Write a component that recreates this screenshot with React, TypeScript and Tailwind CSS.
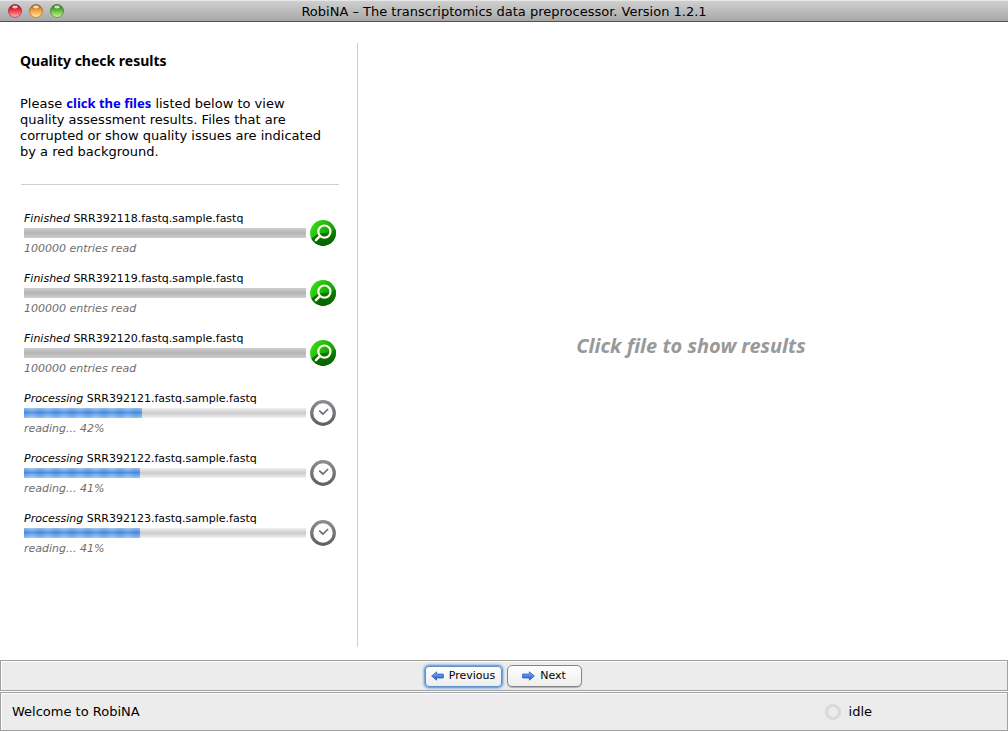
type FileEntry = { name: string; percent: number };

const files: FileEntry[] = [
  { name: "SRR392118.fastq.sample.fastq", percent: 100 },
  { name: "SRR392119.fastq.sample.fastq", percent: 100 },
  { name: "SRR392120.fastq.sample.fastq", percent: 100 },
  { name: "SRR392121.fastq.sample.fastq", percent: 42 },
  { name: "SRR392122.fastq.sample.fastq", percent: 41 },
  { name: "SRR392123.fastq.sample.fastq", percent: 41 },
];

const lights = [
  { id: "close", label: "Close", top: "#7d1a22", mid: "#ea2c38", low: "#ffb4b8" },
  { id: "minimize", label: "Minimize", top: "#94501a", mid: "#ee9838", low: "#fff09a" },
  { id: "zoom", label: "Zoom", top: "#2c6a1e", mid: "#5cb034", low: "#cdf79c" },
];

function TitleBar() {
  return (
    <header className="flex h-[22px] shrink-0 items-center border-t border-b border-t-[#e6e6e6] border-b-[#515151] bg-linear-to-b from-[#cfcfcf] to-[#a8a8a8] px-2">
      <div className="flex flex-1 gap-[7px]">
        {lights.map((l) => (
          <button key={l.id} type="button" aria-label={l.label} className="size-[14px]">
            <svg viewBox="0 0 14 14" className="block size-full">
              <defs>
                <linearGradient id={l.id} x1="0" y1="0" x2="0" y2="1">
                  <stop offset="0" stopColor={l.top} />
                  <stop offset="0.4" stopColor={l.mid} />
                  <stop offset="1" stopColor={l.low} />
                </linearGradient>
              </defs>
              <circle cx="7" cy="7.5" r="6.5" fill="#e2e2e2" opacity="0.6" />
              <circle cx="7" cy="7" r="6.5" fill={`url(#${l.id})`} stroke={l.top} strokeOpacity="0.6" strokeWidth="1" />
              <ellipse cx="7" cy="3" rx="2.8" ry="1.4" fill="#fff" opacity="0.75" />
            </svg>
          </button>
        ))}
      </div>
      <h1 className="pt-[2px] text-[13px] leading-[18px]">RobiNA – The transcriptomics data preprocessor. Version 1.2.1</h1>
      <div className="flex-1" />
    </header>
  );
}

function MagnifierIcon() {
  return (
    <svg viewBox="0 0 26 26" className="block size-full">
      <defs>
        <linearGradient id="leaf" x1="0" y1="0" x2="1" y2="0.6">
          <stop offset="0" stopColor="#3bea14" />
          <stop offset="1" stopColor="#0b8a04" />
        </linearGradient>
        <linearGradient id="shade" x1="0" y1="0" x2="0" y2="1">
          <stop offset="0" stopColor="#0a8204" />
          <stop offset="1" stopColor="#066000" />
        </linearGradient>
        <clipPath id="disc">
          <circle cx="13" cy="13" r="12.9" />
        </clipPath>
      </defs>
      <g clipPath="url(#disc)">
        <rect width="26" height="26" fill="url(#leaf)" />
        <path d="M0 19 C5 17 6 13.5 13 13 C20 12.7 23 11 26 9 V26 H0Z" fill="url(#shade)" />
      </g>
      <circle cx="14.4" cy="11.6" r="6.1" fill="none" stroke="#fffde8" strokeWidth="2.2" />
      <path d="M10 16 L5.9 20.2" stroke="#fffde8" strokeWidth="2.5" strokeLinecap="round" />
    </svg>
  );
}

function ClockIcon() {
  return (
    <svg viewBox="0 0 26 26" className="block size-full">
      <defs>
        <linearGradient id="ring" x1="0" y1="0" x2="0" y2="1">
          <stop offset="0" stopColor="#898b8f" />
          <stop offset="1" stopColor="#606266" />
        </linearGradient>
      </defs>
      <circle cx="13" cy="13" r="11.3" fill="#fff" stroke="url(#ring)" strokeWidth="3.2" />
      <path d="M9.2 10.6 L12.9 14 L18.1 9" fill="none" stroke="#6d6f73" strokeWidth="1.7" />
    </svg>
  );
}

function FileRow({ name, percent }: FileEntry) {
  const done = percent === 100;
  return (
    <li className="flex h-[60px] items-start gap-1">
      <div className="min-w-0 flex-1">
        <p className="truncate text-[11px] leading-[18px]">
          <em>{done ? "Finished" : "Processing"}</em> {name}
        </p>
        <div
          role="progressbar"
          aria-label={name}
          aria-valuenow={percent}
          className={
            done
              ? "h-[10px] bg-linear-to-b from-[#cecece] via-[#b4b4b4] to-[#cfcfcf]"
              : "h-[10px] bg-linear-to-b from-[#f0f0f0] via-[#cbcbcb] to-[#f2f2f2]"
          }
        >
          {!done && (
            <div
              className="h-full bg-[repeating-linear-gradient(90deg,#2563b028_0px,#ffffff14_8px,#2563b028_16px),linear-gradient(180deg,#a3c8f2_0%,#4c8ddf_45%,#5a9ae8_55%,#9ed0fb_100%)]"
              style={{ width: `${percent}%` }}
            />
          )}
        </div>
        <p className="mt-[2px] text-[11px] leading-[18px] text-[#6e6e6e] italic">
          {done ? "100000 entries read" : `reading... ${percent}%`}
        </p>
      </div>
      <button type="button" aria-label={`${done ? "View" : "Pending"} ${name}`} className="mt-[10px] size-[26px] shrink-0">
        {done ? <MagnifierIcon /> : <ClockIcon />}
      </button>
    </li>
  );
}

function ArrowIcon({ left }: { left?: boolean }) {
  return (
    <svg viewBox="0 0 13 10" className={left ? "h-[10px] w-[13px] -scale-x-100" : "h-[10px] w-[13px]"}>
      <defs>
        <linearGradient id="arrow" x1="0" y1="0" x2="0" y2="1">
          <stop offset="0" stopColor="#8fbcff" />
          <stop offset="0.55" stopColor="#4580f0" />
          <stop offset="1" stopColor="#1c48b4" />
        </linearGradient>
      </defs>
      <path d="M0.6 3 H7.4 V0.8 L12.4 5 L7.4 9.2 V7 H0.6Z" fill="url(#arrow)" stroke="#2c55ac" strokeWidth="0.7" strokeLinejoin="round" />
    </svg>
  );
}

export default function App() {
  return (
    <div className="flex min-h-screen flex-col bg-white pb-px font-['DejaVu_Sans',sans-serif] text-black">
      <TitleBar />
      <main className="flex flex-1 pt-[21px] pb-[13px]">
        <section className="w-[358px] shrink-0 border-r border-[#cfcfcf] pr-[18px] pl-5">
          <h2 className="pt-2 font-['Noto_Sans',sans-serif] text-[14px] leading-5 font-bold">Quality check results</h2>
          <p className="mt-6 text-[13px] leading-4">
            Please <strong className="font-['Noto_Sans',sans-serif] text-[#0000ee]">click the files</strong> listed below to view
            <br />
            quality assessment results. Files that are
            <br />
            corrupted or show quality issues are indicated
            <br />
            by a red background.
          </p>
          <hr className="mt-6 ml-px border-[#cfcfcf]" />
          <ul className="mt-[25px] pr-[3px] pl-1">
            {files.map((f) => (
              <FileRow key={f.name} {...f} />
            ))}
          </ul>
        </section>
        <section className="flex flex-1 items-center justify-center pt-[2px] pl-4">
          <p className="font-['Noto_Sans',sans-serif] text-[20px] leading-6 font-bold text-[#999999] italic">
            Click file to show results
          </p>
        </section>
      </main>
      <nav className="flex h-[31px] items-center justify-center gap-[5px] border border-[#a0a0a0] bg-[#ececec] pt-px pr-[2px] shadow-[inset_1px_1px_0_#ffffff]">
        <button
          type="button"
          className="flex h-[21px] w-[77px] items-center justify-center gap-[5px] rounded-[4px] border border-[#5f8fc4] bg-linear-to-b from-white to-[#ededed] text-[11px] shadow-[0_0_0_1px_#7aa7da,0_0_2px_2px_#9dc0e8]"
        >
          <ArrowIcon left />
          Previous
        </button>
        <button
          type="button"
          className="flex h-[22px] w-[75px] items-center justify-center gap-[5px] rounded-[5px] border border-[#858585] bg-linear-to-b from-white to-[#ededed] text-[11px] shadow-[0_1px_1px_#b0b0b0]"
        >
          <ArrowIcon />
          Next
        </button>
      </nav>
      <footer className="mt-px flex h-[39px] items-center justify-between border border-[#a0a0a0] bg-[#ececec] pr-[135px] pl-[11px] text-[13px] shadow-[inset_1px_1px_0_#ffffff]">
        <span>Welcome to RobiNA</span>
        <span className="flex items-center gap-2">
          <span className="size-4 rounded-full border-3 border-[#d8d9dc]" />
          idle
        </span>
      </footer>
    </div>
  );
}
